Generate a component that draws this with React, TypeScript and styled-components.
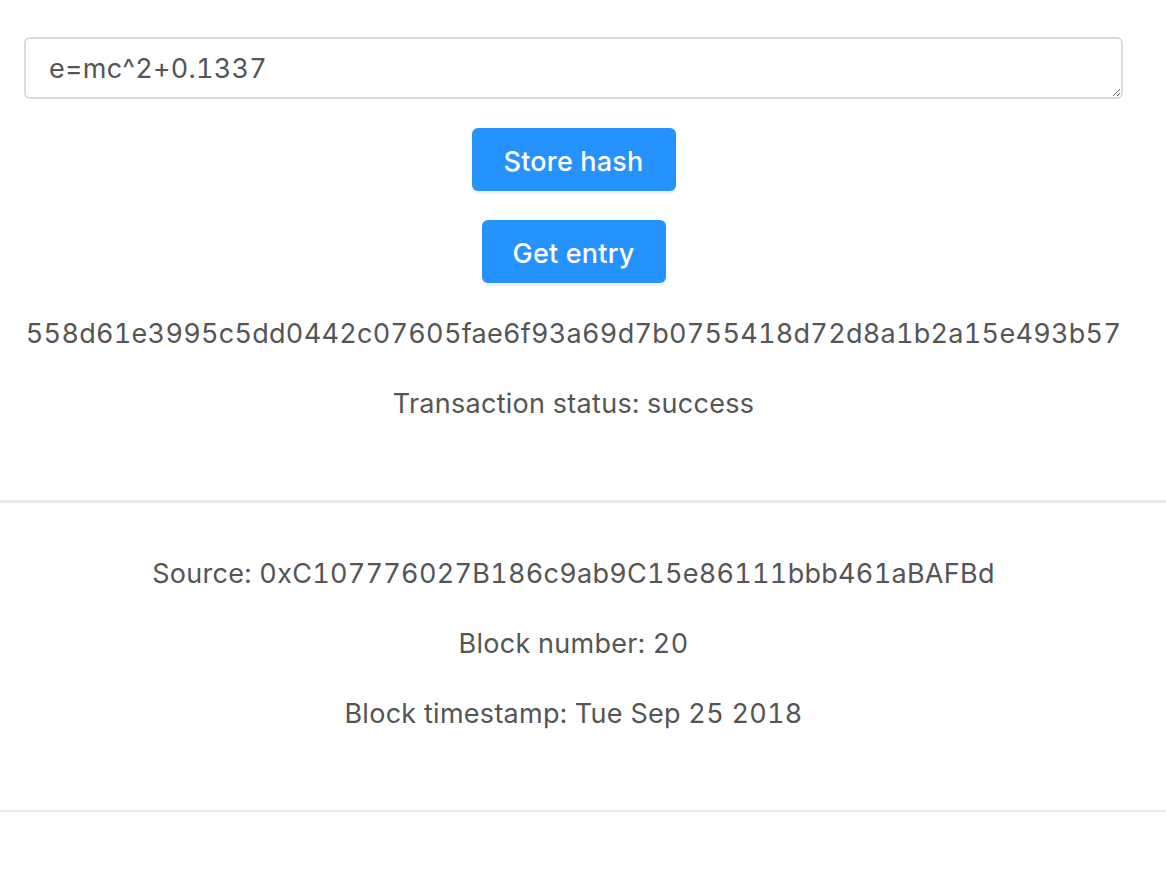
import React from "react";
import styled, { createGlobalStyle } from "styled-components";

const Global = createGlobalStyle`
  html, body { margin: 0; padding: 0; background: #fff; }
  body {
    font-family: Inter, "Noto Sans", sans-serif;
    color: #555;
    font-feature-settings: "tnum" 1;
  }
  * { box-sizing: border-box; }
`;

const Page = styled.div`
  display: flex;
  flex-direction: column;
`;

const Section = styled.section<{ $pad: string }>`
  display: flex;
  flex-direction: column;
  align-items: center;
  padding: ${(p) => p.$pad};
`;

const Input = styled.textarea`
  width: 100%;
  height: 62px;
  border: 2px solid #dcdcdc;
  border-radius: 6px;
  padding: 14px 23px;
  font-family: Inter, "Noto Sans", sans-serif;
  font-feature-settings: "tnum" 1;
  font-size: 27px;
  letter-spacing: 0.25px;
  line-height: 32px;
  color: #555;
  resize: vertical;
  outline: none;
`;

const Button = styled.button<{ $w: number }>`
  width: ${(p) => p.$w}px;
  height: 63px;
  margin-top: 29px;
  padding: 4px 0 0;
  border: none;
  border-radius: 6px;
  background: #2592fd;
  color: #fff;
  font-family: Inter, "Noto Sans", sans-serif;
  font-size: 27px;
  font-weight: 500;
  letter-spacing: 0.2px;
  box-shadow: 0 3px 0 #f2f2f2;
  cursor: pointer;
`;

const Line = styled.p<{ $top: number }>`
  margin: ${(p) => p.$top}px 0 0;
  font-size: 27px;
  letter-spacing: 0.28px;
  line-height: 40px;
  text-align: center;
  white-space: nowrap;
`;

const Divider = styled.hr<{ $h: number; $top: number }>`
  margin: ${(p) => p.$top}px 0 0;
  border: none;
  height: ${(p) => p.$h}px;
  background: #e8e8e8;
`;

export default function App() {
  return (
    <Page>
      <Global />
      <Section $pad="37px 43px 0 24px">
        <Input defaultValue="e=mc^2+0.1337" />
        <Button $w={204}>Store hash</Button>
        <Button $w={184}>Get entry</Button>
        <Line $top={31}>558d61e3995c5dd0442c07605fae6f93a69d7b0755418d72d8a1b2a15e493b57</Line>
        <Line $top={30}>Transaction status: success</Line>
      </Section>
      <Divider $h={3} $top={76} />
      <Section $pad="0 43px 0 24px">
        <Line $top={51}>Source: 0xC107776027B186c9ab9C15e86111bbb461aBAFBd</Line>
        <Line $top={30}>Block number: 20</Line>
        <Line $top={30}>Block timestamp: Tue Sep 25 2018</Line>
      </Section>
      <Divider $h={2} $top={76} />
    </Page>
  );
}
